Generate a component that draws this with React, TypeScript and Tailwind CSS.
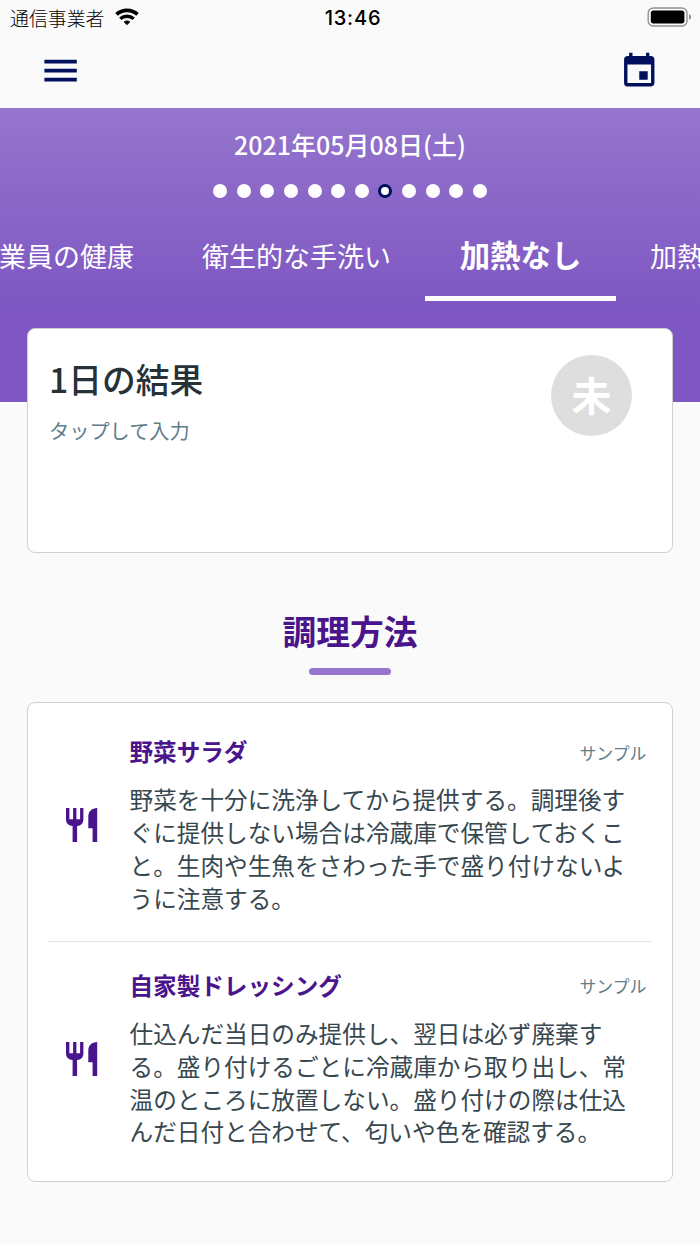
import clsx from 'clsx'
import { MdEvent, MdMenu } from 'react-icons/md'

const tabs = [
  { label: '従業員の健康', width: 'w-[230px]' },
  { label: '衛生的な手洗い', width: 'w-[257px]' },
  { label: '加熱なし', width: 'w-[191px]', active: true },
  { label: '加熱あり', width: 'w-[176px]' },
]

const methods = [
  {
    name: '野菜サラダ',
    body: '野菜を十分に洗浄してから提供する。調理後すぐに提供しない場合は冷蔵庫で保管しておくこと。生肉や生魚をさわった手で盛り付けないように注意する。',
  },
  {
    name: '自家製ドレッシング',
    body: '仕込んだ当日のみ提供し、翌日は必ず廃棄する。盛り付けるごとに冷蔵庫から取り出し、常温のところに放置しない。盛り付けの際は仕込んだ日付と合わせて、匂いや色を確認する。',
  },
]

function StatusBar() {
  return (
    <div className="grid h-[34px] grid-cols-3 items-center pl-[10px] pr-[8px] text-black">
      <div className="flex items-center gap-[11px]">
        <span className="relative top-px text-[18.9px] font-light">通信事業者</span>
        <svg width="24" height="18" viewBox="0 0 24 18" fill="none" stroke="currentColor">
          <path d="M1.5 6.4C7.3 1 16.7 1 22.5 6.4" strokeWidth="3.7" />
          <path d="M5.3 10.8c3.8-3.4 9.6-3.4 13.4 0" strokeWidth="3.5" />
          <path
            d="M12 16.6 9.2 13.9c1.6-1.2 4-1.2 5.6 0z"
            fill="currentColor"
            strokeWidth="1"
            strokeLinejoin="round"
          />
        </svg>
      </div>
      <span className="relative top-px pl-[4px] text-center font-[Inter] text-[20px] font-medium tracking-[0.8px]">
        13:46
      </span>
      <svg className="justify-self-end" width="45" height="20" viewBox="0 0 45 20">
        <rect x="1.2" y="1" width="38.8" height="18" rx="5" fill="none" stroke="#929292" strokeWidth="1.4" />
        <rect x="3.8" y="3.6" width="33.6" height="12.8" rx="2.6" fill="#000" />
        <path d="M42 7c1.3.5 2.1 1.6 2.1 3s-.8 2.5-2.1 3z" fill="#929292" />
      </svg>
    </div>
  )
}

function Dots() {
  return (
    <div className="flex justify-center gap-[9.64px]">
      {Array.from({ length: 12 }, (_, i) => (
        <span
          key={i}
          className={clsx(
            'size-[14px] rounded-full bg-white',
            i === 7 && 'border-[3px] border-[#00105c]'
          )}
        />
      ))}
    </div>
  )
}

function CutleryIcon() {
  return (
    <svg className="ml-[17.7px] mr-[31.8px] shrink-0" width="32" height="34" viewBox="0 0 32 34" fill="#4a148c">
      <path d="M0 0h3.4v11.2h3.7V0h3.3v11.2h3.7V0h3.3v11.5c0 3.8-2.4 6.2-6.3 6.6V34H6.6V18.1C2.5 17.7 0 15.3 0 11.5z" />
      <path d="M31.2 0v34h-4.6V20.3h-4.3V8.5c0-5 3.6-8.5 8.9-8.5z" />
    </svg>
  )
}

function Method({ name, body }: { name: string; body: string }) {
  return (
    <li className="flex h-[233px] items-center border-b border-[#e4e4e4] last:border-b-0">
      <CutleryIcon />
      <div className="-mt-px w-[517px]">
        <div className="flex h-[36px] items-center justify-between">
          <h3 className="text-[23.6px] font-bold text-[#4a148c]">{name}</h3>
          <span className="text-[16.9px] text-[#607d8b]">サンプル</span>
        </div>
        <p className="mt-[13px] w-[500px] text-[23.65px] leading-[32.9px] text-[#37474f]">
          {body}
        </p>
      </div>
    </li>
  )
}

export default function App() {
  return (
    <div className="h-[1244px] w-[700px] overflow-hidden bg-[#fafafa] font-['Noto_Sans_CJK_JP',sans-serif]">
      <header className="h-[108px]">
        <StatusBar />
        <nav className="flex h-[74px] items-center justify-between pl-[39.4px] pr-[40.7px] text-[#00105c]">
          <MdMenu className="size-[43.2px]" />
          <MdEvent className="size-[40.5px]" />
        </nav>
      </header>

      <section className="h-[294px] overflow-hidden bg-[linear-gradient(#9575cd,#7e57c2_200px)] text-white">
        <p className="mt-[18px] text-center text-[25px] leading-[36px] font-medium">
          2021年05月08日(土)
        </p>
        <div className="mt-[21.5px]">
          <Dots />
        </div>
        <div className="mt-[13.5px] -ml-[62px] flex">
          {tabs.map((tab) => (
            <div
              key={tab.label}
              className={clsx(
                'flex h-[90px] shrink-0 items-center justify-center border-b-[5px]',
                tab.width,
                tab.active
                  ? 'border-white pt-[2px] text-[30.4px] font-bold'
                  : 'border-transparent pt-[5px] text-[27px]'
              )}
            >
              {tab.label}
            </div>
          ))}
        </div>
      </section>

      <main className="px-[27px]">
        <section className="relative -mt-[74px] flex h-[225px] justify-between rounded-lg border border-[#cfcfcf] bg-white pt-[26px] pr-[40px] pl-[21px]">
          <div>
            <h1 className="-mt-px text-[33.75px] leading-[50px] font-medium text-[#263238]">1日の結果</h1>
            <p className="mt-[12px] text-[20.2px] leading-[30px] text-[#607d8b]">
              タップして入力
            </p>
          </div>
          <div className="flex size-[81px] items-center justify-center rounded-full bg-[#dedede] pb-[3px] text-[40px] font-bold text-white">
            未
          </div>
        </section>

        <div className="mt-[54px] flex flex-col items-center">
          <h2 className="-mt-px text-[33.75px] leading-[50px] font-bold text-[#4a148c]">調理方法</h2>
          <div className="mt-[12px] h-[7px] w-[82px] rounded-full bg-[#9575cd]" />
        </div>

        <ul className="mt-[27px] h-[480px] rounded-lg border border-[#cfcfcf] bg-white px-[20px] pt-[6px]">
          {methods.map((method) => (
            <Method key={method.name} {...method} />
          ))}
        </ul>
      </main>
    </div>
  )
}
